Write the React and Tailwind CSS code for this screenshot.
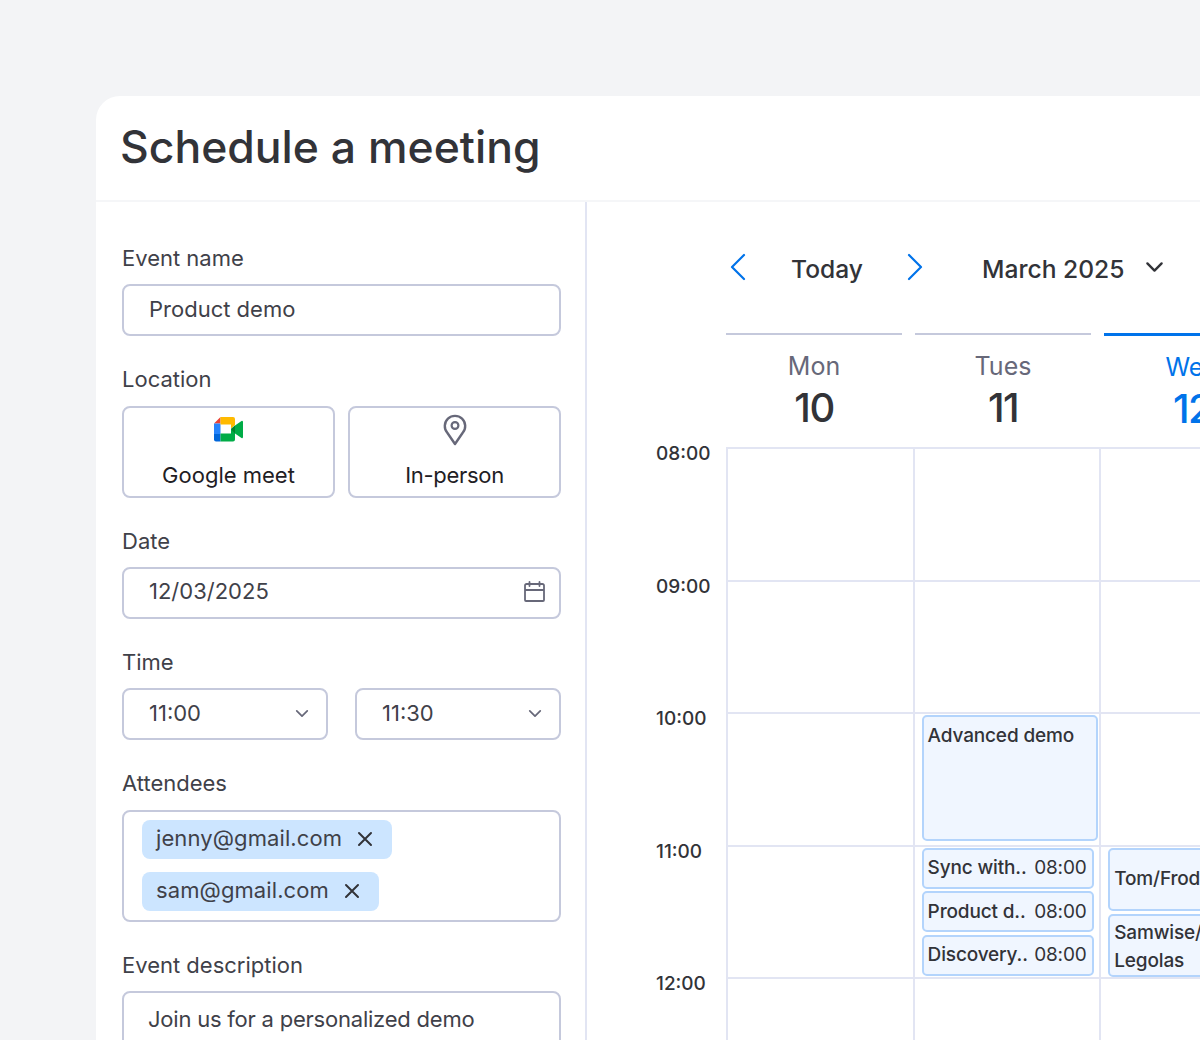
import React from "react";

function Chevron({ className = "" }) {
  return (
    <svg viewBox="0 0 16 10" fill="none" className={className}>
      <path d="M2 2l6 6 6-6" stroke="currentColor" strokeWidth="2" strokeLinecap="round" strokeLinejoin="round" />
    </svg>
  );
}

function MeetIcon() {
  return (
    <svg viewBox="0 0 30 25" className="h-[25px] w-[30px]">
      <path d="M6.5 0L0 6.5h6.5z" fill="#ea4335" />
      <path d="M0 6.5h6.5V17H0z" fill="#2684fc" />
      <path d="M0 17h6.5v7.5H2a2 2 0 0 1-2-2z" fill="#0066da" />
      <path d="M6.5 0H19a2 2 0 0 1 2 2v6l-4 3.5V7.5H6.5z" fill="#ffba00" />
      <path d="M6.5 16.5H17V12l4-3.5V22.500a2 2 0 0 1-2 2H6.500z" fill="#00ac47" />
      <path d="M17 12l4-3.5v8L17 12z" fill="#00832d" />
      <path d="M21 8.500L27.500 4a1 1 0 0 1 1.500 1v15a1 1 0 0 1-1.500 1L21 16.500z" fill="#00ac47" />
    </svg>
  );
}

function PinIcon() {
  return (
    <svg viewBox="0 0 24 32" fill="none" className="h-[32px] w-[24px] text-[#676879]">
      <path d="M12 30L4.300 18.800a10.200 10.200 0 1 1 15.400 0L12 30z" stroke="currentColor" strokeWidth="2.400" strokeLinejoin="round" />
      <circle cx="12" cy="11.500" r="3.400" stroke="currentColor" strokeWidth="2.200" />
    </svg>
  );
}

function CalendarIcon() {
  return (
    <svg viewBox="0 0 21 21" fill="none" className="h-[21px] w-[21px] text-[#676879]">
      <path d="M5.500 3H2.500A1.500 1.500 0 0 0 1 4.500V19a1 1 0 0 0 1 1h17a1 1 0 0 0 1-1V4.500A1.500 1.500 0 0 0 18.500 3h-3M5.500 3h10M1 9h19M5.500 1v4M15.500 1v4" stroke="currentColor" strokeWidth="1.800" strokeLinecap="round" />
    </svg>
  );
}

function CloseIcon() {
  return (
    <svg viewBox="0 0 16 16" fill="none" className="h-[16px] w-[16px] text-[#323338]">
      <path d="M2 2l12 12M14 2L2 14" stroke="currentColor" strokeWidth="2" strokeLinecap="round" />
    </svg>
  );
}

function Field({ label, children }) {
  return (
    <div className="flex flex-col">
      <div className="mb-[14.33px] h-[24px] text-[22px] leading-[24px] text-[#3f4149]">{label}</div>
      {children}
    </div>
  );
}

function Input({ children }) {
  return (
    <div className="flex h-[52px] items-center justify-between rounded-lg border-2 border-[#c5c9dc] bg-white pb-[2px] pl-[25px] pr-[14px] text-[22px] text-[#3f4149]">
      {children}
    </div>
  );
}

function Chip({ children }) {
  return (
    <div className="flex h-[39px] w-fit items-center gap-[15px] rounded-lg bg-[#cce5ff] pl-[14px] pr-[19px] text-[22px] tracking-[0.1px] text-[#3f4149]">
      <span className="pb-[1px]">{children}</span>
      <CloseIcon />
    </div>
  );
}

function LocationButton({ icon, children }) {
  return (
    <div className="flex h-[92px] flex-col items-center justify-end rounded-lg border-2 border-[#c5c9dc] bg-white pb-[6px] text-[22px] text-[#1f2024]">
      <div className="mb-[14px] flex h-[32px] items-center justify-center">{icon}</div>
      <span className="leading-[30px]">{children}</span>
    </div>
  );
}

function Event({ className = "", children }) {
  return (
    <div className={"shrink-0 rounded-[5px] border-2 border-[#b3d4fc] bg-[#f0f6ff] pl-[4px] pr-[5px] text-[19px] font-medium leading-[28px] tracking-[-0.15px] text-[#323338] " + className}>
      {children}
    </div>
  );
}

function SmallEvent({ name, time }) {
  return (
    <Event className="flex h-[41px] w-[172px] items-center justify-between whitespace-nowrap">
      <span>{name}</span>
      <span className="font-normal">{time}</span>
    </Event>
  );
}

function Row({ time, tue, wed }) {
  return (
    <div className="flex h-[132.5px]">
      <div className="w-[71px] shrink-0 pl-[1px] text-[19px] font-medium leading-[14px] text-[#323338]">{time}</div>
      <div className="h-full w-[186.6px] shrink-0 border-l-2 border-t-2 border-[#e2e5f3]" />
      <div className="h-full w-[186.6px] shrink-0 border-l-2 border-t-2 border-[#e2e5f3] pl-[7px]">{tue}</div>
      <div className="h-full w-[186.6px] shrink-0 border-l-2 border-t-2 border-[#e2e5f3] pl-[7px]">{wed}</div>
      <div className="h-full w-[186.6px] shrink-0 border-l-2 border-t-2 border-[#e2e5f3]" />
    </div>
  );
}

function DayHead({ name, num, active }) {
  return (
    <div className="flex w-[176px] shrink-0 flex-col items-center">
      <div className={"w-full " + (active ? "h-[3px] bg-[#0073ea]" : "h-[2px] bg-[#c5c9dc]")} />
      <div className={"pt-[15px] text-[25px] leading-[32px] " + (active ? "pb-[1px] text-[#0073ea]" : "pb-[1px] text-[#676879]")}>{name}</div>
      <div className={"text-[40px] font-medium leading-[50px] tracking-[-1.5px] " + (active ? "text-[#0073ea]" : "text-[#323338]")}>{num}</div>
    </div>
  );
}

export default function App() {
  return (
    <div className="h-[1040px] w-[1200px] overflow-hidden bg-[#f3f4f6] pl-[96px] pt-[96px] font-['Inter',sans-serif]">
      <div className="w-[1400px] rounded-tl-3xl bg-white">
        <div className="flex h-[106px] items-center border-b-2 border-[#f5f6f8] pb-[2px] pl-[24px] text-[44.5px] font-medium text-[#323338]">
          Schedule a meeting
        </div>
        <div className="flex">
          <div className="flex w-[491px] shrink-0 flex-col gap-[31px] border-r-2 border-[#e2e5f3] pb-10 pl-[26px] pr-[24px] pt-[44px]">
            <Field label="Event name">
              <Input>Product demo</Input>
            </Field>
            <Field label="Location">
              <div className="flex gap-[13px]">
                <div className="flex-1"><LocationButton icon={<MeetIcon />}>Google meet</LocationButton></div>
                <div className="flex-1"><LocationButton icon={<PinIcon />}><span className="tracking-[-0.3px]">In-person</span></LocationButton></div>
              </div>
            </Field>
            <Field label="Date">
              <Input>
                <span>12/03/2025</span>
                <CalendarIcon />
              </Input>
            </Field>
            <Field label="Time">
              <div className="flex gap-[27px]">
                <div className="flex-1">
                  <Input>
                    <span>11:00</span>
                    <Chevron className="mr-[3px] h-[9px] w-[14px] text-[#676879]" />
                  </Input>
                </div>
                <div className="flex-1">
                  <Input>
                    <span>11:30</span>
                    <Chevron className="mr-[3px] h-[9px] w-[14px] text-[#676879]" />
                  </Input>
                </div>
              </div>
            </Field>
            <Field label="Attendees">
              <div className="flex h-[112px] flex-col gap-[13px] rounded-lg border-2 border-[#c5c9dc] pl-[18px] pt-[8px]">
                <Chip>jenny@gmail.com</Chip>
                <Chip>sam@gmail.com</Chip>
              </div>
            </Field>
            <Field label="Event description">
              <div className="h-[120px] rounded-lg border-2 border-[#c5c9dc] pl-[24px] pt-[10px] text-[22px] tracking-[-0.22px] text-[#3f4149]">
                Join us for a personalized demo
              </div>
            </Field>
          </div>
          <div className="min-w-0 flex-1 pl-[139px] pt-[50px]">
            <div className="flex h-[32px] items-center text-[24.6px] font-medium text-[#323338]">
              <svg viewBox="0 0 16 28" fill="none" className="mb-[3px] ml-[4px] h-[28px] w-[16px] text-[#0073ea]">
                <path d="M14 2L2 14l12 12" stroke="currentColor" strokeWidth="2.200" strokeLinecap="round" strokeLinejoin="round" />
              </svg>
              <span className="ml-[45px] w-[116px] pt-[3px]">Today</span>
              <svg viewBox="0 0 16 28" fill="none" className="mb-[3px] h-[28px] w-[16px] text-[#0073ea]">
                <path d="M2 2l12 12L2 26" stroke="currentColor" strokeWidth="2.200" strokeLinecap="round" strokeLinejoin="round" />
              </svg>
              <span className="ml-[59px] whitespace-nowrap pt-[3px]">March 2025</span>
              <Chevron className="mb-[3px] ml-[21px] h-[12px] w-[19px] text-[#323338]" />
            </div>
            <div className="mt-[49px] flex gap-[13px]">
              <DayHead name="Mon" num="10" />
              <DayHead name="Tues" num="11" />
              <DayHead name="Wed" num="12" active />
            </div>
            <div className="-ml-[71px] mt-[13px]">
              <Row time="08:00" />
              <Row time="09:00" />
              <Row
                time="10:00"
                tue={<Event className="mt-[1px] h-[126px] w-[176px] pt-[5px]">Advanced demo</Event>}
              />
              <Row
                time="11:00"
                tue={
                  <div className="flex flex-col gap-[2.5px] pt-[1px]">
                    <SmallEvent name="Sync with.." time="08:00" />
                    <SmallEvent name="Product d.." time="08:00" />
                    <SmallEvent name="Discovery.." time="08:00" />
                  </div>
                }
                wed={
                  <div className="flex flex-col gap-[3px] pt-[1px]">
                    <Event className="flex h-[63px] w-[172px] items-center whitespace-nowrap">Tom/Frodo</Event>
                    <Event className="flex h-[63px] w-[172px] items-center pt-[4px]">Samwise/<br />Legolas</Event>
                  </div>
                }
              />
              <Row time="12:00" />
            </div>
          </div>
        </div>
      </div>
    </div>
  );
}
